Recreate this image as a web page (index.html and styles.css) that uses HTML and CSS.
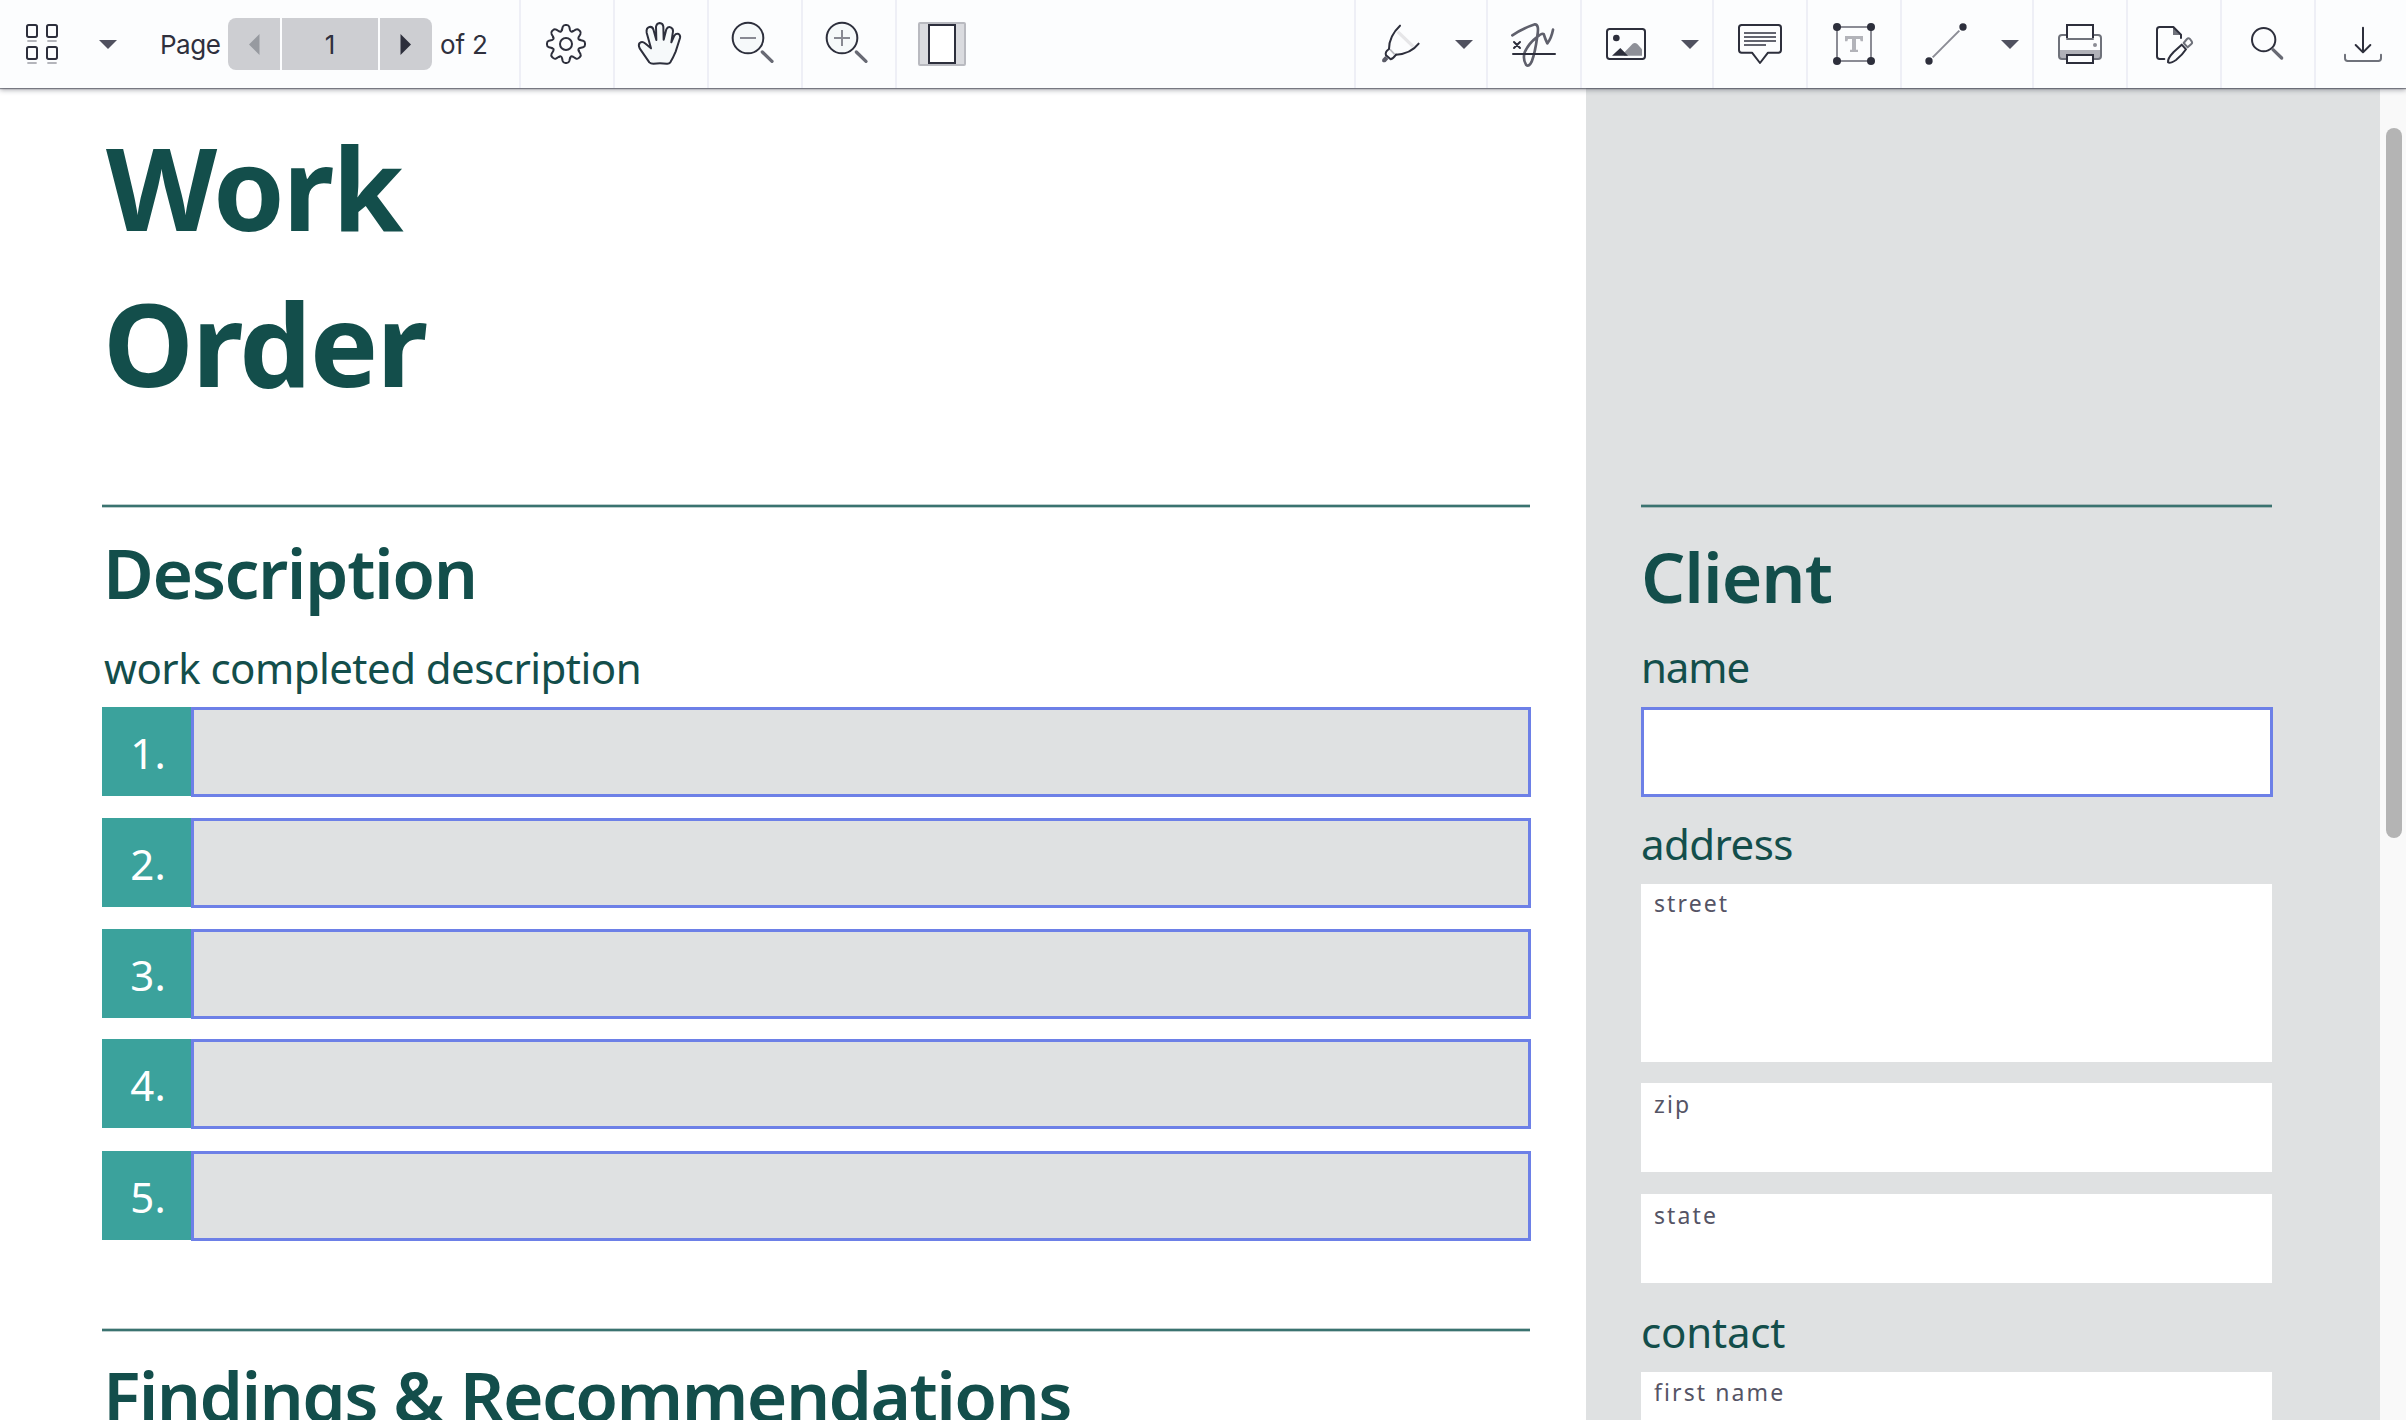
FILE: index.html
```html
<!DOCTYPE html>
<html lang="en">
<head>
<meta charset="utf-8">
<title>Work Order</title>
<link rel="stylesheet" href="styles.css">
</head>
<body>
<header class="toolbar">
  <button class="tool thumbs" aria-label="Thumbnails">
    <svg class="icon" viewBox="0 0 252 264">
      <g class="ink"><rect x="81" y="75" width="30" height="36" rx="5"/><rect x="141" y="75" width="30" height="36" rx="5"/><rect x="81" y="141" width="30" height="36" rx="5"/><rect x="141" y="141" width="30" height="36" rx="5"/></g>
      <path class="pale-line" d="M82 123h28M142 123h28M82 189h28M142 189h28"/>
    </svg>
  </button>
  <button class="tool thumbs-menu" aria-label="Sidebar menu">
    <svg class="icon" viewBox="252 0 144 264"><path class="caret" d="M297 120h54l-27 27z"/></svg>
  </button>
  <div class="pager">
    <span class="pager-label">Page</span>
    <div class="pager-group">
      <button class="pager-step" aria-label="Previous page"><svg viewBox="0 0 52 52"><path class="step-off" d="M21 26.5L31.5 16v21z"/></svg></button>
      <span class="pager-current">1</span>
      <button class="pager-step" aria-label="Next page"><svg viewBox="0 0 52 52"><path class="step-on" d="M20.500 16L31 26.500L20.500 37z"/></svg></button>
    </div>
    <span class="pager-total">of 2</span>
  </div>

  <div class="tools">
    <button class="tool boxed" aria-label="Settings">
      <svg class="icon" viewBox="63 0 276 264">
        <defs><path id="tooth" d="M-12-42L-10-51Q-8-57-2-57H2Q8-57 10-51L12-42Q15-34 21-39"/></defs>
        <g class="ink" transform="translate(198 132)">
          <use href="#tooth"/><use href="#tooth" transform="rotate(45)"/><use href="#tooth" transform="rotate(90)"/><use href="#tooth" transform="rotate(135)"/><use href="#tooth" transform="rotate(180)"/><use href="#tooth" transform="rotate(225)"/><use href="#tooth" transform="rotate(270)"/><use href="#tooth" transform="rotate(315)"/>
          <circle r="18"/>
        </g>
      </svg>
    </button>
    <button class="tool boxed" aria-label="Pan">
      <svg class="icon" viewBox="345 0 276 264">
        <path class="ink tint" d="M453 145L440 98Q438 84 448 81Q457 79 460 88L469 120L468 80Q470 70 479 69Q489 70 490 80L491 119L499 88Q503 79 512 82Q520 86 519 94L514 127L523 107Q528 99 536 102Q542 106 540 114L527 155Q520 172 511 187Q507 192 500 191Q480 188 460 191Q452 191 448 187L419 145Q414 135 419 129Q427 123 435 130Z"/>
      </svg>
    </button>
    <button class="tool boxed" aria-label="Zoom out">
      <svg class="icon" viewBox="627 0 276 264"><circle class="ink tint" cx="744" cy="114" r="46"/><path class="mid-line" d="M720 114h48"/><path class="handle" d="M787 156l29 28"/></svg>
    </button>
    <button class="tool boxed" aria-label="Zoom in">
      <svg class="icon" viewBox="909 0 276 264"><circle class="ink tint" cx="1026" cy="114" r="46"/><path class="mid-line" d="M1002 114h48M1026 90v48"/><path class="handle" d="M1069 156l29 28"/></svg>
    </button>
    <button class="tool boxed" aria-label="Fit page">
      <svg class="icon" viewBox="1191 0 276 264"><rect class="fit-back" x="1257" y="69" width="138" height="126" rx="3"/><rect class="fit-page" x="1287" y="75" width="78" height="114"/></svg>
    </button>
  </div>

  <div class="tools tools-end">
    <button class="tool boxed wide" aria-label="Draw">
      <svg class="icon" viewBox="48 0 390 264">
        <path class="pen-band" d="M173 95L220 140"/>
        <path class="ink" d="M180 77Q147 108 147 147M236 131Q212 162 168 164"/>
        <path class="ink" d="M147 147Q134 156 138 166L152 178Q159 176 168 164"/>
        <path class="pen-collar" d="M150 148l14 15"/>
        <path class="pen-tip" d="M136 168l9 9-8 9q-6 2-10-1-2-6 1-9z"/>
        <path class="caret" d="M345 120h54l-27 27z"/>
      </svg>
    </button>
    <button class="tool boxed" aria-label="Sign">
      <svg class="icon" viewBox="444 0 276 264">
        <path class="signature" d="M517 106Q550 84 585 73Q598 73 592 108Q585 160 575 185Q567 202 558 194Q548 178 554 157Q566 130 590 112Q606 98 611 102Q616 118 622 130Q634 115 639 89"/>
        <path class="ink" d="M519 162h126"/><path class="cross" d="M522 126l18 18M540 126l-18 18"/>
      </svg>
    </button>
    <button class="tool boxed wide" aria-label="Image">
      <svg class="icon" viewBox="726 0 390 264">
        <path class="hill" d="M852 167V158L878 131Q885 127 892 132L906 148V167z"/><path class="solid" d="M816 167L841 144L864 167z"/><circle class="solid" cx="829" cy="114" r="10"/>
        <rect class="ink" x="801" y="87" width="114" height="90" rx="8"/>
        <path class="caret" d="M1023 120h54l-27 27z"/>
      </svg>
    </button>
    <button class="tool boxed" aria-label="Note">
      <svg class="icon" viewBox="72 0 276 264"><path class="ink" d="M155 75H265Q273 75 273 83V150Q273 158 265 158H234L210 189L186 158H155Q147 158 147 150V83Q147 75 155 75z"/><path class="note-lines" d="M162 99h96M162 111h96M162 123h96M162 135h66"/></svg>
    </button>
    <button class="tool boxed" aria-label="Text">
      <svg class="icon" viewBox="354 0 276 264"><rect class="frame" x="441" y="81" width="102" height="102"/><g class="solid"><circle cx="441" cy="81" r="12"/><circle cx="543" cy="81" r="12"/><circle cx="441" cy="183" r="12"/><circle cx="543" cy="183" r="12"/></g><path class="serif-mark" d="M465 108H519V124H512L510 117H498V149H504V156H480V149H486V117H474L472 124H465z"/></svg>
    </button>
    <button class="tool boxed wide" aria-label="Line">
      <svg class="icon" viewBox="636 0 390 264"><path class="frame" d="M728 172L808 92"/><circle class="solid" cx="717" cy="183" r="11"/><circle class="solid" cx="819" cy="81" r="11"/><path class="caret" d="M933 120h54l-27 27z"/></svg>
    </button>
    <button class="tool boxed" aria-label="Print">
      <svg class="icon" viewBox="-36 0 276 264"><path class="tray" d="M42 150H162V172Q162 176 156 177H48Q42 177 42 172z"/><rect class="slate" x="39" y="105" width="126" height="72" rx="9"/><circle class="dot" cx="147" cy="135" r="6"/><path class="slate cover" d="M63 117h78"/><path class="ink square cover" d="M63 114V75H141V114"/><rect class="ink square cover" x="63" y="165" width="78" height="24"/></svg>
    </button>
    <button class="tool boxed" aria-label="Edit document">
      <svg class="icon" viewBox="246 0 276 264"><path class="fold" d="M381 80L406 105H381z"/><path class="ink" d="M355 177H341Q333 177 333 169V89Q333 81 341 81H382L405 104V114"/><path class="ink" d="M407 134L420 148Q410 164 390 180Q372 192 366 187Q364 176 383 156Z"/><path class="slate" d="M413 129L423 117Q427 113 432 117L437 124Q440 129 436 132L425 142Z"/></svg>
    </button>
    <button class="tool boxed" aria-label="Search">
      <svg class="icon" viewBox="528 0 276 264"><circle class="ink" cx="653" cy="119" r="35"/><path class="handle" d="M681 149l26 25"/></svg>
    </button>
    <button class="tool boxed last" aria-label="Download">
      <svg class="icon" viewBox="810 0 270 264"><path class="ink" d="M951 83V157M929 135L951 157L973 135"/><path class="slate" d="M897 164V175Q897 183 905 183H997Q1005 183 1005 175V164"/></svg>
    </button>
  </div>
</header>

<main class="viewer">
  <section class="sheet">
    <h1 class="title"><span class="title-work">Work</span><span class="title-order">Order</span></h1>
    <hr class="rule">
    <h2 class="heading heading-description">Description</h2>
    <p class="label label-work">work completed description</p>
    <ol class="items">
      <li class="item"><span class="item-no">1.</span><span class="field"></span></li>
      <li class="item"><span class="item-no">2.</span><span class="field"></span></li>
      <li class="item"><span class="item-no">3.</span><span class="field"></span></li>
      <li class="item item-fourth"><span class="item-no">4.</span><span class="field"></span></li>
      <li class="item item-last"><span class="item-no">5.</span><span class="field"></span></li>
    </ol>
    <hr class="rule rule-second">
    <h2 class="heading heading-findings">Findings &amp; Recommendations</h2>
  </section>
  <aside class="client">
    <hr class="rule">
    <h2 class="heading heading-client">Client</h2>
    <p class="label label-name">name</p>
    <span class="field field-name"></span>
    <p class="label label-address">address</p>
    <div class="box box-street">street</div>
    <div class="box box-zip">zip</div>
    <div class="box box-state">state</div>
    <p class="label label-contact">contact</p>
    <div class="box box-first">first name</div>
  </aside>
  <div class="scroll-track"><div class="scroll-thumb"></div></div>
</main>
</body>
</html>
```
FILE: styles.css
```css
* { box-sizing: border-box; }

body {
  margin: 0;
  width: 2406px;
  height: 1420px;
  overflow: hidden;
  background: #fff;
  display: flex;
  flex-direction: column;
  font-family: "Noto Sans", sans-serif;
}

h1, h2, p, ol { margin: 0; padding: 0; font-weight: normal; }
button { padding: 0; border: 0; background: none; display: block; }

/* Toolbar */
.toolbar {
  position: relative;
  z-index: 1;
  flex: none;
  display: flex;
  height: 88px;
  background: #fcfdfe;
  box-shadow: 0 1px 1px rgba(43, 46, 60, .5), 0 2px 5px rgba(43, 46, 60, .4);
}
.tools { display: flex; }
.tools-end { margin-left: auto; }
.tool { flex: none; height: 88px; width: 92px; }
.thumbs { width: 84px; }
.thumbs-menu { width: 48px; }
.boxed { width: 94px; border-left: 2px solid #eeeff6; }
.wide { width: 132px; }
.last { width: 92px; }
.icon { display: block; width: 100%; height: 88px; }

.pager {
  display: flex;
  align-items: center;
  width: 387px;
  padding-left: 28px;
  font: 26px/54px Inter, sans-serif;
  color: #2f303d;
}
.pager-label { width: 68px; letter-spacing: -.5px; }
.pager-group { display: flex; gap: 2px; height: 52px; border-radius: 8px; overflow: hidden; }
.pager-step { width: 52px; height: 52px; background: #cdced2; }
.pager-step svg { display: block; }
.pager-current { width: 96px; background: #cdced2; text-align: center; }
.pager-label, .pager-total { padding-top: 1px; }
.pager-total { margin-left: 8px; letter-spacing: -.2px; }
.step-off { fill: #979aa0; }
.step-on { fill: #2d2f3c; }

.ink { fill: none; stroke: #2d2f3c; stroke-width: 6; stroke-linecap: round; stroke-linejoin: round; }
.square { stroke-linecap: butt; stroke-linejoin: miter; }
.tint { fill: #f6f9fa; }
.cover { fill: #fcfdfe; }
.solid { fill: #2d2f3c; }
.caret { fill: #50515f; }
.pale-line { stroke: #b4b5bb; stroke-width: 6; }
.mid-line { fill: none; stroke: #888992; stroke-width: 6; }
.handle { fill: none; stroke: #686a74; stroke-width: 10; stroke-linecap: round; }
.fit-back { fill: #dadbdf; stroke: #b9bac0; stroke-width: 6; }
.fit-page { fill: #fff; stroke: #2d2f3c; stroke-width: 6; }
.pen-band { stroke: #e6e6e8; stroke-width: 10; }
.pen-collar { stroke: #b9bac0; stroke-width: 5; }
.pen-tip { fill: #5b5c68; }
.signature { fill: none; stroke: #5f606c; stroke-width: 8; stroke-linecap: round; stroke-linejoin: round; }
.cross { stroke: #2d2f3c; stroke-width: 6; stroke-linecap: round; }
.hill { fill: #8e9098; }
.note-lines { stroke: #62646f; stroke-width: 6; }
.frame { fill: none; stroke: #8b8c95; stroke-width: 6; }
.serif-mark { fill: #b2b3b9; }
.slate { fill: none; stroke: #6f727b; stroke-width: 6; stroke-linecap: round; stroke-linejoin: round; }
.slate.cover { fill: #fcfdfe; }
.ink.cover { fill: #fcfdfe; }
.tray { fill: #b0b1b8; }
.dot { fill: #8b8c95; }
.fold { fill: #6f727b; }

/* Document */
.viewer { flex: 1; min-height: 0; display: flex; }
.sheet { width: 1586px; padding: 21px 55px 0 102px; color: #134e4b; }
.title { display: flex; flex-direction: column; font-size: 115px; line-height: 156px; font-weight: 700; height: 312px; }
.title-work { padding-left: 4px; letter-spacing: -2px; }
.title-order { padding-left: 1px; letter-spacing: -2px; }
.rule {
  height: 4px;
  width: 1428px;
  margin: 83px 0 0;
  border: solid rgba(19, 78, 75, .28);
  border-width: 1px 0;
  background: #3a7370;
  background-clip: padding-box;
}
.heading { font-size: 69.5px; line-height: 80px; font-weight: 600; letter-spacing: -1px; white-space: nowrap; }
.heading-description { margin-top: 24px; padding-left: 1px; letter-spacing: -1.4px; }
.label { font-size: 42px; line-height: 50px; white-space: nowrap; color: #134e4b; }
.label-work { margin: 31px 0 14px 2px; letter-spacing: -.54px; }

.items { list-style: none; display: flex; flex-direction: column; gap: 21px; width: 1429px; }
.item { display: flex; height: 90px; }
.item-fourth { margin-top: -1px; }
.item-last { margin-top: 1px; }
.item-no { width: 89px; height: 89px; padding-left: 3px; background: #3ba29c; color: #fff; font-size: 42px; line-height: 92px; font-weight: 400; text-align: center; }
.field { flex: 1; display: block; height: 90px; border: 3px solid #6d80e7; background: #dfe1e2; }
.rule-second { margin-top: 87px; }
.heading-findings { margin-top: 23px; padding-left: 1px; letter-spacing: -1.6px; }

.client { width: 794px; padding: 332px 108px 0 55px; background: #dfe1e2; color: #134e4b; }
.client .rule { width: 631px; margin-top: 84px; }
.heading-client { margin-top: 28px; }
.label-name { margin-top: 26px; letter-spacing: -1.1px; }
.field-name { width: 632px; margin-top: 15px; background: #fff; }
.label-address { margin: 22px 0 15px; letter-spacing: -.55px; }
.label-contact { margin: 24px 0 15px; letter-spacing: -.2px; }
.box { width: 631px; height: 89px; padding-left: 13px; background: #fff; color: #555465; font-size: 23px; line-height: 28px; letter-spacing: 2.1px; }
.box-street { height: 178px; padding-top: 5px; }
.box-zip { margin-top: 21px; padding-top: 7px; }
.box-state { margin-top: 22px; padding-top: 7px; }
.box-first { padding-top: 6px; }

.scroll-track { flex: 1; padding: 40px 4px 0 6px; background: #f9f9f9; }
.scroll-thumb { height: 710px; border-radius: 8px; background: #b4b4b4; }
```
